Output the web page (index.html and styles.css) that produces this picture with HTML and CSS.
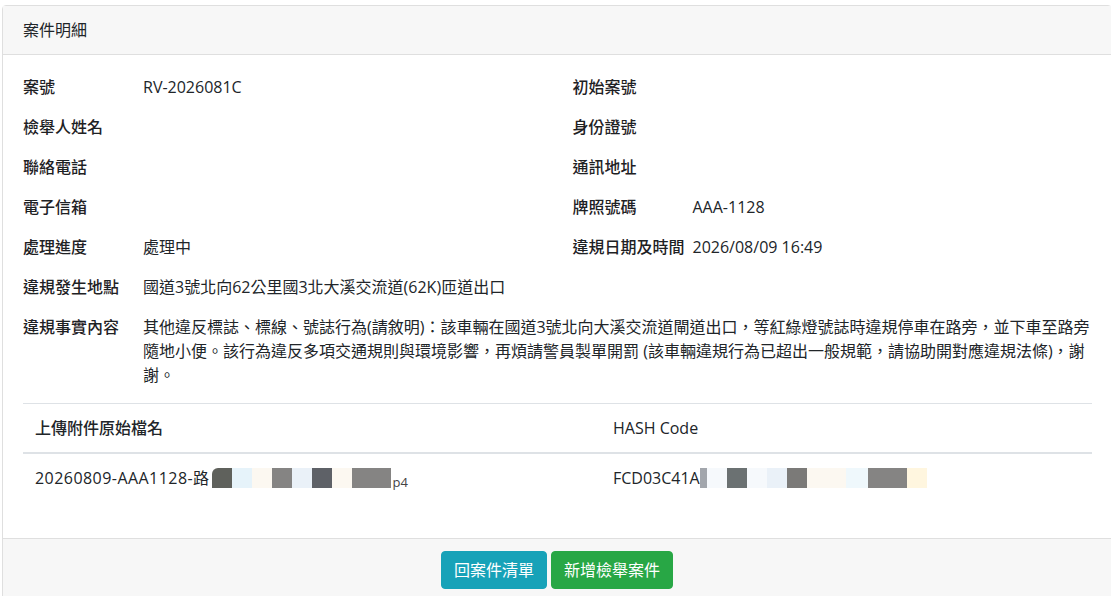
FILE: index.html
```html
<!DOCTYPE html>
<html lang="zh-Hant">
<head>
<meta charset="utf-8">
<title>案件明細</title>
<link rel="stylesheet" href="styles.css">
</head>
<body>
<div class="page">
  <div class="card">
    <div class="card-header">案件明細</div>
    <div class="card-body">
      <div class="info-grid">
        <div class="field"><span class="label">案號</span><span class="value">RV-2026081C</span></div>
        <div class="field"><span class="label">初始案號</span><span class="value"></span></div>
        <div class="field"><span class="label">檢舉人姓名</span><span class="value"></span></div>
        <div class="field"><span class="label">身份證號</span><span class="value"></span></div>
        <div class="field"><span class="label">聯絡電話</span><span class="value"></span></div>
        <div class="field"><span class="label">通訊地址</span><span class="value"></span></div>
        <div class="field"><span class="label">電子信箱</span><span class="value"></span></div>
        <div class="field"><span class="label">牌照號碼</span><span class="value">AAA-1128</span></div>
        <div class="field"><span class="label">處理進度</span><span class="value">處理中</span></div>
        <div class="field"><span class="label">違規日期及時間</span><span class="value">2026/08/09 16:49</span></div>
        <div class="field full"><span class="label">違規發生地點</span><span class="value">國道3號北向62公里國3北大溪交流道(62K)匝道出口</span></div>
        <div class="field full"><span class="label">違規事實內容</span><span class="value">其他違反標誌、標線、號誌行為(請敘明)：該車輛在國道3號北向大溪交流道閘道出口，等紅綠燈號誌時違規停車在路旁，並下車至路旁隨地小便。該行為違反多項交通規則與環境影響，再煩請警員製單開罰 (該車輛違規行為已超出一般規範，請協助開對應違規法條)，謝謝。</span></div>
      </div>
      <table class="files">
        <thead>
          <tr><th class="col-name">上傳附件原始檔名</th><th>HASH Code</th></tr>
        </thead>
        <tbody>
          <tr>
            <td><span class="masked"><span class="fname">20260809-AAA1128-路</span><span class="px px-dark"></span><span class="px px-sky"></span><span class="px px-cream"></span><span class="px px-gray"></span><span class="px px-mist"></span><span class="px px-slate"></span><span class="px px-cream"></span><span class="px px-gray px-wide"></span><span class="tail">p4</span></span></td>
            <td><span class="masked">FCD03C41A<span class="px px-sliver"></span><span class="px px-snow"></span><span class="px px-slate2"></span><span class="px px-snow"></span><span class="px px-mist"></span><span class="px px-taupe"></span><span class="px px-cream px-wide"></span><span class="px px-ice"></span><span class="px px-gray px-wide"></span><span class="px px-butter"></span></span></td>
          </tr>
        </tbody>
      </table>
    </div>
    <div class="card-footer">
      <a class="btn btn-info" href="#">回案件清單</a>
      <a class="btn btn-success" href="#">新增檢舉案件</a>
    </div>
  </div>
</div>
</body>
</html>
```

FILE: styles.css
```css
html, body {
  margin: 0;
  padding: 0;
  overflow: hidden;
  background: #fff;
}

body {
  font-family: "Open Sans", "Noto Sans CJK TC", "Noto Sans", sans-serif;
  font-size: 16px;
  line-height: 1.5;
  color: #212529;
}

.page {
  padding: 5px 0 0 2px;
}

.card {
  width: 1110px;
  border: 1px solid #dfdfdf;
  border-radius: 4px;
  background: #fff;
  box-sizing: border-box;
}

.card-header {
  padding: 12px 20px;
  background: #f7f7f7;
  border-bottom: 1px solid #dfdfdf;
  font-size: 16px;
  line-height: 24px;
}

.card-body {
  padding: 20px 19px 20px 20px;
}

.info-grid {
  display: grid;
  grid-template-columns: 1fr 1fr;
  column-gap: 30px;
  row-gap: 16px;
  margin-bottom: 16px;
}

.field {
  display: grid;
  grid-template-columns: 120px 1fr;
  min-height: 24px;
}

.field.full {
  grid-column: 1 / span 2;
}

.label {
  font-weight: 500;
  color: #1e2124;
}

.value {
  min-width: 0;
}

.files {
  width: 100%;
  border-collapse: collapse;
  margin-bottom: 16px;
}

.files th,
.files td {
  padding: 12px;
  text-align: left;
  vertical-align: top;
  line-height: 24px;
}

.files th {
  font-weight: 500;
  border-top: 1px solid #dee2e6;
  border-bottom: 2px solid #dee2e6;
}

.files .col-name {
  width: 554px;
}

.masked {
  display: inline-flex;
  align-items: center;
  white-space: nowrap;
}

.fname {
  letter-spacing: 0.45px;
  margin-right: 2px;
}

.px {
  display: inline-block;
  width: 20px;
  height: 20px;
}

.px-wide { width: 39px; }
.px-dark { background: #5f615c; border-radius: 6px 0 0 0; }
.px-sky { background: #e6f3fa; }
.px-cream { background: #fcf8f1; }
.px-gray { background: #858483; }
.px-mist { background: #eaf1f8; }
.px-slate { background: #5e6167; }
.px-sliver { width: 7px; background: #a2a6ac; }
.px-snow { background: #f6f9fc; }
.px-slate2 { background: #6b7172; }
.px-taupe { background: #7b7a78; }
.px-ice { width: 22px; background: #eff8fc; }
.px-butter { background: #fff6df; }

.tail {
  font-size: 13px;
  color: #444;
  align-self: flex-end;
  line-height: 16px;
  margin-left: 2px;
}

.card-footer {
  padding: 12px 20px;
  background: #f7f7f7;
  border-top: 1px solid #dfdfdf;
  text-align: center;
  font-size: 0;
}

.btn {
  display: inline-block;
  padding: 6px 12px;
  border: 1px solid transparent;
  border-radius: 4px;
  font-size: 16px;
  line-height: 24px;
  color: #fff;
  text-decoration: none;
  vertical-align: middle;
}

.btn + .btn {
  margin-left: 4px;
}

.btn-info {
  background: #17a2b8;
  border-color: #17a2b8;
}

.btn-success {
  background: #28a745;
  border-color: #28a745;
}
```
